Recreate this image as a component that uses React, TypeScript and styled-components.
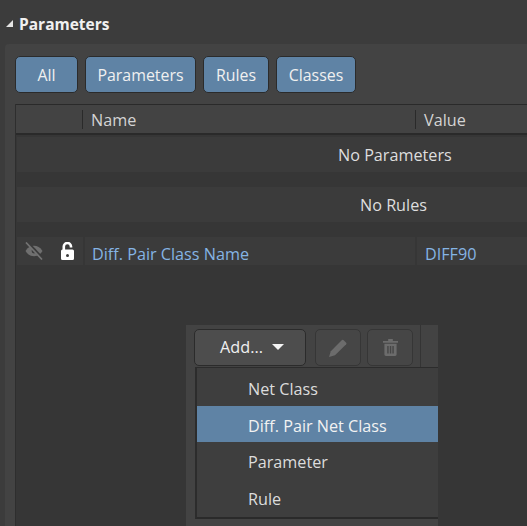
import styled, { createGlobalStyle } from 'styled-components';

const GlobalStyle = createGlobalStyle`
    html, body {
        margin: 0;
        padding: 0;
        height: 526px;
        overflow: hidden;
        background: #3c3c3c;
        font-family: 'Open Sans', 'Noto Sans', sans-serif;
    }
`;

const Page = styled.div`
    position: relative;
    width: 527px;
    height: 526px;
    display: flex;
    flex-direction: column;
    overflow: hidden;
`;

const SectionHeader = styled.div`
    height: 44px;
    display: flex;
    align-items: center;
    gap: 6px;
    padding: 3px 0 0 6px;
    box-sizing: border-box;
`;

const Collapse = styled.span`
    width: 0;
    height: 0;
    border-style: solid;
    border-width: 0 0 7px 7px;
    border-color: transparent transparent #e4e4e4 transparent;
`;

const SectionTitle = styled.h2`
    margin: 0;
    font-size: 15.5px;
    font-weight: 700;
    color: #f0f0f0;
`;

const Panel = styled.div`
    flex: 1;
    margin-left: 5px;
    padding: 12px 0 0 10px;
    background: #434343;
    border-top-left-radius: 4px;
    display: flex;
    flex-direction: column;
    min-height: 0;
`;

const Filters = styled.div`
    display: flex;
    gap: 7px;
    height: 37px;
    margin-bottom: 11px;
`;

const Filter = styled.button<{ $width: number }>`
    width: ${p => p.$width}px;
    height: 37px;
    padding: 0;
    background: #5f83a5;
    border: 1px solid #2b2b2b;
    border-radius: 5px;
    color: #f0f0f0;
    font-family: inherit;
    font-size: 15.9px;
`;

const Table = styled.div`
    flex: 1;
    display: flex;
    flex-direction: column;
    background: #363636;
    border-left: 1px solid #2e2e2e;
    min-height: 0;
`;

const TableHead = styled.div`
    height: 31px;
    display: grid;
    grid-template-columns: 66px 333px 1fr;
    align-items: center;
    background: #434343;
    border-top: 1px solid #2a2a2a;
    border-bottom: 2px solid #2a2a2a;
    box-sizing: border-box;
    flex-shrink: 0;
`;

const HeadCell = styled.div<{ $divider?: boolean }>`
    height: 19px;
    line-height: 21px;
    padding-left: 8px;
    font-size: 16.2px;
    color: #d4d4d4;
    border-left: ${p => (p.$divider ? '1px solid #2a2a2a' : 'none')};
`;

const EmptyRow = styled.div<{ $indent: number; $top: number }>`
    height: 35px;
    margin: ${p => p.$top}px 0 0 1px;
    padding-left: ${p => p.$indent}px;
    background: #3b3b3b;
    color: #dedede;
    font-size: 16.2px;
    line-height: 36px;
    flex-shrink: 0;
`;

const DataRow = styled.div`
    margin: 15px 0 0 1px;
    height: 28px;
    display: grid;
    grid-template-columns: 66px 332px 1fr;
    flex-shrink: 0;
`;

const IconCell = styled.div`
    display: flex;
    align-items: center;
    gap: 18px;
    padding-left: 8px;
    background: #3b3b3b;
`;

const DataCell = styled.div<{ $inset: number }>`
    margin-left: 2px;
    padding-left: ${p => p.$inset}px;
    background: #3b3b3b;
    color: #85b4e4;
    font-size: 16.2px;
    line-height: 34px;
    height: 28px;
    overflow: hidden;
`;

const AddOverlay = styled.div`
    position: absolute;
    left: 186px;
    top: 325px;
    width: 252px;
    height: 201px;
    background: #434343;
`;

const Toolbar = styled.div`
    display: flex;
    align-items: flex-start;
    padding: 4px 0 0 8px;
    height: 42px;
    box-sizing: border-box;
`;

const AddButton = styled.button`
    width: 112px;
    height: 37px;
    padding: 0 0 2px 4px;
    background: #4d4d4d;
    border: 1px solid #2b2b2b;
    border-radius: 5px;
    color: #f0f0f0;
    font-family: inherit;
    font-size: 16.2px;
    display: flex;
    align-items: center;
    justify-content: center;
    gap: 9px;
`;

const Caret = styled.span`
    width: 0;
    height: 0;
    border-style: solid;
    border-width: 6px 6px 0 6px;
    border-color: #f4f4f4 transparent transparent transparent;
`;

const ToolButton = styled.button<{ $gap: number }>`
    width: 46px;
    height: 37px;
    margin-left: ${p => p.$gap}px;
    padding: 0;
    background: #464646;
    border: 1px solid #363636;
    border-radius: 5px;
    display: flex;
    align-items: center;
    justify-content: center;
`;

const ToolDivider = styled.span`
    width: 1px;
    height: 42px;
    margin: -4px 0 0 7px;
    background: #343434;
`;

const Menu = styled.div`
    margin-left: 9px;
    width: 243px;
    height: 152px;
    padding-top: 1px;
    box-sizing: border-box;
    background: #3e3e3e;
    border-left: 2px solid #2c2c2c;
    border-top: 1px solid #2c2c2c;
    border-bottom: 2px solid #2a2a2a;
`;

const MenuItem = styled.div<{ $active?: boolean }>`
    height: 36.6px;
    padding-left: 51px;
    line-height: 41px;
    font-size: 16.2px;
    color: ${p => (p.$active ? '#f2f2f2' : '#dcdcdc')};
    background: ${p => (p.$active ? '#5f83a5' : 'transparent')};
    overflow: hidden;
`;

function EyeOff() {
    return (
        <svg width="18" height="18" viewBox="0 0 18 18">
            <path d="M0.500 9C2.800 5.400 5.700 3.800 9 3.800s6.200 1.600 8.500 5.200c-2.300 3.600-5.200 5.200-8.500 5.200S2.800 12.600.5 9z" fill="#6f6f6f" />
            <circle cx="9" cy="9" r="2.400" fill="#3b3b3b" />
            <path d="M2.500 0.500 17.500 16.500" stroke="#3b3b3b" strokeWidth="3" />
            <path d="M1 0.500 17 17.500" stroke="#737373" strokeWidth="1.700" />
        </svg>
    );
}

function LockOpen() {
    return (
        <svg width="13" height="18" viewBox="0 0 13 18">
            <path d="M2.800 8V4.600a3.600 3.600 0 0 1 7.200 0V5.500" fill="none" stroke="#fff" strokeWidth="2.600" />
            <path fillRule="evenodd" fill="#fff" d="M1.500 7.500h10A1.500 1.500 0 0 1 13 9v7.500a1.500 1.500 0 0 1-1.500 1.500h-10A1.500 1.500 0 0 1 0 16.500V9a1.500 1.500 0 0 1 1.500-1.500zm5 4.500a1.500 1.500 0 1 0 0 3 1.500 1.500 0 0 0 0-3z" />
        </svg>
    );
}

function Pencil() {
    return (
        <svg width="20" height="20" viewBox="0 0 20 20">
            <path fill="#6c6c6c" d="M1 19 2.800 13.200 14 2a1 1 0 0 1 1.400 0l2.800 2.800a1 1 0 0 1 0 1.400L7 17.300z" />
        </svg>
    );
}

function Trash() {
    return (
        <svg width="15" height="19" viewBox="0 0 16 20">
            <path fill="#6c6c6c" fillRule="evenodd" d="M5.500 1h5v2H16v2H0V3h5.500zM1.500 6h13v11.500a1.500 1.500 0 0 1-1.500 1.500H3a1.500 1.500 0 0 1-1.500-1.500zM4.500 8.500v8h1.500v-8zM7.300 8.500v8h1.500v-8zM10 8.500v8h1.500v-8z" />
        </svg>
    );
}

export default function App() {
    return (
        <Page>
            <GlobalStyle />
            <SectionHeader>
                <Collapse />
                <SectionTitle>Parameters</SectionTitle>
            </SectionHeader>
            <Panel>
                <Filters>
                    <Filter $width={63}>All</Filter>
                    <Filter $width={111}>Parameters</Filter>
                    <Filter $width={66}>Rules</Filter>
                    <Filter $width={80}>Classes</Filter>
                </Filters>
                <Table>
                    <TableHead>
                        <div />
                        <HeadCell $divider>Name</HeadCell>
                        <HeadCell $divider>Value</HeadCell>
                    </TableHead>
                    <EmptyRow $indent={321} $top={2}>No Parameters</EmptyRow>
                    <EmptyRow $indent={343} $top={15}>No Rules</EmptyRow>
                    <DataRow>
                        <IconCell>
                            <EyeOff />
                            <LockOpen />
                        </IconCell>
                        <DataCell $inset={7}>Diff. Pair Class Name</DataCell>
                        <DataCell $inset={8}>DIFF90</DataCell>
                    </DataRow>
                </Table>
            </Panel>
            <AddOverlay>
                <Toolbar>
                    <AddButton>
                        Add...
                        <Caret />
                    </AddButton>
                    <ToolButton $gap={9}>
                        <Pencil />
                    </ToolButton>
                    <ToolButton $gap={6}>
                        <Trash />
                    </ToolButton>
                    <ToolDivider />
                </Toolbar>
                <Menu>
                    <MenuItem>Net Class</MenuItem>
                    <MenuItem $active>Diff. Pair Net Class</MenuItem>
                    <MenuItem>Parameter</MenuItem>
                    <MenuItem>Rule</MenuItem>
                </Menu>
            </AddOverlay>
        </Page>
    );
}
